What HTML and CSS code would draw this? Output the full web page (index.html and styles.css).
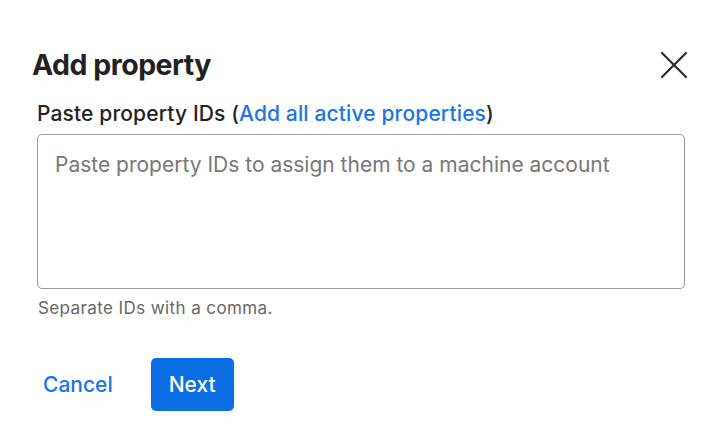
FILE: index.html
```html
<!DOCTYPE html>
<html lang="en">

<head>
    <meta charset="UTF-8">
    <meta name="viewport" content="width=device-width, initial-scale=1.0">
    <title>Add property</title>
    <link rel="stylesheet" href="styles.css">
</head>

<body>
    <div class="dialog">
        <div class="dialog-header">
            <h2>Add property</h2>
            <button class="close-btn" aria-label="Close">
                <svg width="28" height="28" viewBox="0 0 28 28">
                    <path d="M2 2 L26 26 M26 2 L2 26" stroke="#2b2b2b" stroke-width="2.2" stroke-linecap="round" />
                </svg>
            </button>
        </div>

        <div class="dialog-body">
            <label for="propertyIds" class="field-label">Paste property IDs (<a href="#">Add all active properties</a>)</label>
            <textarea id="propertyIds" placeholder="Paste property IDs to assign them to a machine account"></textarea>
            <p class="hint">Separate IDs with a comma.</p>
        </div>

        <div class="dialog-footer">
            <button class="btn-link">Cancel</button>
            <button class="btn-primary">Next</button>
        </div>
    </div>
</body>

</html>
```

FILE: styles.css
```css
body {
    margin: 0;
    background-color: #ffffff;
    font-family: Inter, "Liberation Sans", Arial, sans-serif;
    color: #222222;
}

.dialog {
    width: 723px;
    height: 444px;
    box-sizing: border-box;
    padding-top: 45px;
}

.dialog-header {
    display: flex;
    justify-content: space-between;
    align-items: center;
    padding: 0 35px 0 32px;
}

.dialog-header h2 {
    margin: 0;
    font-size: 28.5px;
    font-weight: 700;
    letter-spacing: -0.5px;
    line-height: 40px;
    color: #222222;
}

.close-btn {
    background: none;
    border: none;
    padding: 0;
    width: 28px;
    height: 28px;
    cursor: pointer;
}

.dialog-body {
    padding: 0 38px 0 37px;
    margin-top: 16px;
}

.field-label {
    display: block;
    font-size: 21px;
    font-weight: 500;
    letter-spacing: 0.13px;
    line-height: 26px;
    color: #222222;
}

.field-label a {
    color: #1a73e8;
    text-decoration: none;
}

textarea {
    display: block;
    box-sizing: border-box;
    width: 648px;
    height: 155px;
    margin-top: 7px;
    padding: 17px 17px;
    border: 1.5px solid #9a9a9a;
    border-radius: 5px;
    font-family: inherit;
    font-size: 21px;
    line-height: 26px;
    resize: none;
}

textarea::placeholder {
    color: #777777;
}

.hint {
    margin: 9px 0 0 1px;
    font-size: 17px;
    letter-spacing: 0.4px;
    color: #666666;
}

.dialog-footer {
    display: flex;
    align-items: center;
    gap: 38px;
    padding-left: 43px;
    margin-top: 40px;
}

.btn-link {
    background: none;
    border: none;
    padding: 0;
    font-family: inherit;
    font-size: 21px;
    font-weight: 500;
    color: #1a73e8;
    cursor: pointer;
}

.btn-primary {
    width: 83px;
    height: 53px;
    background-color: #0b6fe3;
    border: none;
    border-radius: 5px;
    font-family: inherit;
    font-size: 21px;
    font-weight: 500;
    color: #ffffff;
    cursor: pointer;
}
```
